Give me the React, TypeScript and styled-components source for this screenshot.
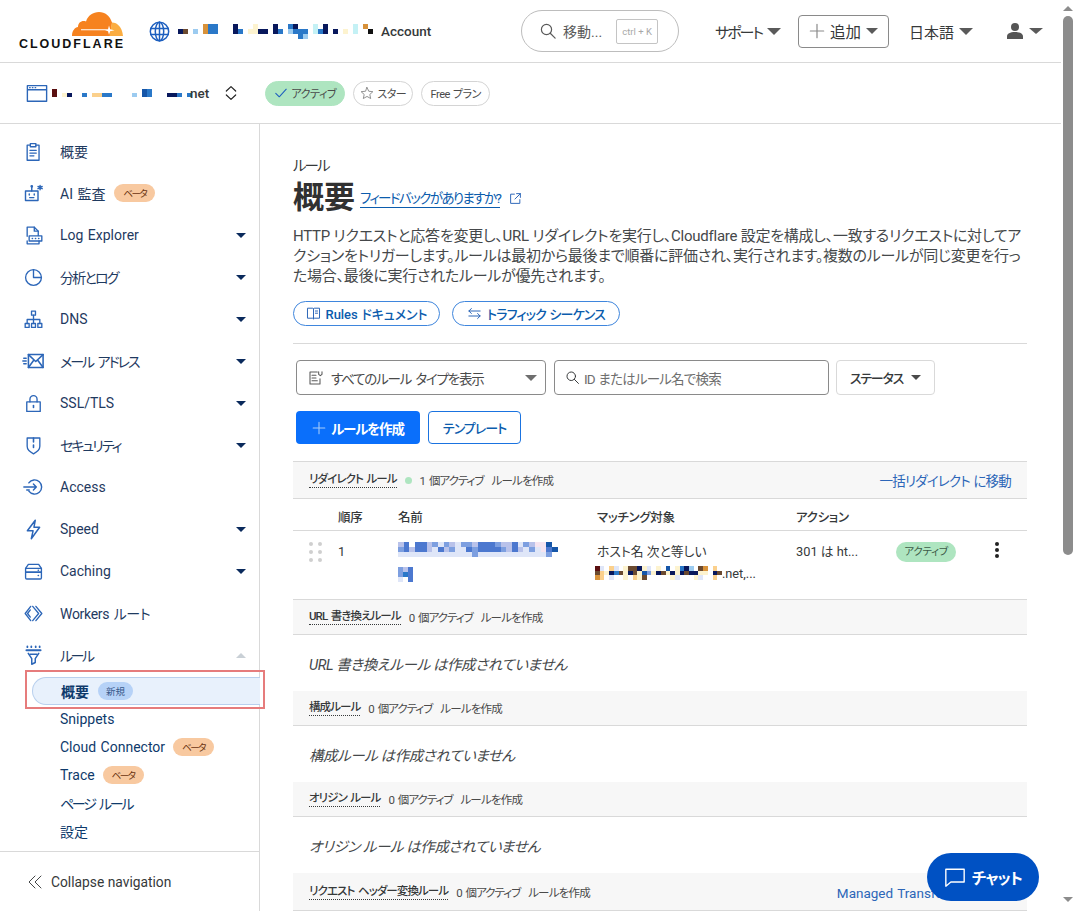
import React from 'react';
import styled, {createGlobalStyle} from 'styled-components';

const FONT = `Roboto, "Noto Sans CJK JP", sans-serif`;
const BLUE = '#2c66b8';
const LINE = '#d9d9d9';

const GlobalStyle = createGlobalStyle`
    html, body {
        margin: 0;
        padding: 0;
        background: #fff;
    }
    body {
        font-family: ${FONT};
        font-feature-settings: "palt";
        font-size: 14px;
        color: #36393a;
    }
    * {
        box-sizing: border-box;
    }
`;

const Page = styled.div`
    display: flex;
    width: 1074px;
    height: 911px;
    overflow: hidden;
    position: relative;
`;

const Main = styled.div`
    width: 1061px;
    display: flex;
    flex-direction: column;
`;

const Scrollbar = styled.div`
    width: 13px;
    display: flex;
    flex-direction: column;
    align-items: center;
    padding-top: 6px;
    position: relative;
`;

const ScrollThumb = styled.div`
    width: 10px;
    height: 539px;
    margin-top: 5px;
    background: #8c8c8c;
    border-radius: 5px;
`;

const ScrollArrowDown = styled.div`
    position: absolute;
    bottom: 6px;
`;

const Caret = styled.span<{$w?: number; $h?: number; $color?: string; $up?: boolean}>`
    display: inline-block;
    flex: none;
    width: 0;
    height: 0;
    border-left: ${({$w = 6}) => $w}px solid transparent;
    border-right: ${({$w = 6}) => $w}px solid transparent;
    ${({$up, $h = 6, $color = '#5a5a5a'}) =>
        $up ? `border-bottom: ${$h}px solid ${$color};` : `border-top: ${$h}px solid ${$color};`}
`;

const TopBar = styled.header`
    height: 63px;
    flex: none;
    display: flex;
    align-items: center;
    padding: 0 18px 0 17px;
    border-bottom: 1px solid ${LINE};
`;

const Logo = styled.div`
    width: 106px;
    display: flex;
    flex-direction: column;
    align-items: flex-end;
`;

const LogoText = styled.span`
    font-family: "Liberation Sans", sans-serif;
    font-weight: 700;
    font-size: 12.5px;
    line-height: 11px;
    letter-spacing: 2px;
    margin-right: -2px;
    color: #111;
    white-space: nowrap;
    margin-top: 3px;
`;

const AccountBlock = styled.div`
    display: flex;
    align-items: center;
    margin-left: 26px;
    gap: 8px;
`;

const AccountName = styled.span`
    font-size: 13.5px;
    font-weight: 500;
    color: #36393a;
`;

const SearchPill = styled.div`
    width: 158px;
    height: 42px;
    margin-left: auto;
    border: 1px solid #bdbdbd;
    border-radius: 21px;
    display: flex;
    align-items: center;
    padding: 0 20px 0 17px;
    color: #5a5a5a;
`;

const SearchLabel = styled.span`
    margin-left: 6px;
    flex: 1;
`;

const KeyHint = styled.span`
    width: 42px;
    height: 25px;
    border: 1px solid #c4c4c4;
    border-radius: 2px;
    font-size: 9.5px;
    color: #a8a8a8;
    display: flex;
    align-items: center;
    justify-content: center;
    white-space: nowrap;
`;

const TopMenu = styled.div<{$ml: number; $ls?: number}>`
    display: flex;
    align-items: center;
    gap: 5px;
    margin-left: ${({$ml}) => $ml}px;
    font-size: 15px;
    letter-spacing: ${({$ls = 0}) => $ls}px;
    color: #36393a;
    white-space: nowrap;
`;

const AddButton = styled.div`
    width: 91px;
    height: 33px;
    margin-left: 17px;
    border: 1px solid #8a8a8a;
    border-radius: 4px;
    display: flex;
    align-items: center;
    justify-content: center;
    gap: 5px;
    font-size: 15.5px;
    color: #36393a;
`;

const ZoneBar = styled.div`
    height: 61px;
    flex: none;
    display: flex;
    align-items: center;
    padding-left: 26px;
    border-bottom: 1px solid ${LINE};
`;

const ZoneName = styled.div`
    display: flex;
    align-items: center;
    margin-left: 4px;
    font-size: 13.5px;
    font-weight: 500;
    & > span {
        margin-left: -2px;
    }
`;

const Chevrons = styled.span`
    margin-left: 14px;
    margin-right: 26px;
    display: flex;
`;

const Chip = styled.span<{$active?: boolean; $w: number}>`
    width: ${({$w}) => $w}px;
    height: 25px;
    margin-right: 8px;
    border-radius: 13px;
    display: inline-flex;
    align-items: center;
    justify-content: center;
    gap: 3px;
    font-size: 11px;
    letter-spacing: -0.5px;
    word-spacing: 1px;
    color: #4a4a4a;
    white-space: nowrap;
    background: ${({$active}) => ($active ? '#aee5c0' : '#fff')};
    border: 1px solid ${({$active}) => ($active ? '#aee5c0' : '#d4d4d4')};
`;

const Body = styled.div`
    flex: 1;
    display: flex;
    min-height: 0;
`;

const Sidebar = styled.nav`
    width: 260px;
    flex: none;
    display: flex;
    flex-direction: column;
    padding-top: 6px;
    border-right: 1px solid ${LINE};
`;

const NavRow = styled.div`
    height: 42px;
    flex: none;
    display: flex;
    align-items: center;
    padding: 0 13px 0 21px;
    color: #1f3a5f;
`;

const NavIcon = styled.span`
    width: 24px;
    height: 24px;
    flex: none;
    margin-right: 15px;
    display: flex;
    align-items: center;
    justify-content: center;
`;

const NavLabel = styled.span`
    flex: 1;
    display: flex;
    align-items: center;
    gap: 9px;
    white-space: nowrap;
`;

const NavText = styled.span<{$ls?: number}>`
    letter-spacing: ${({$ls = 0}) => $ls}px;
    word-spacing: ${({$ls = 0}) => -$ls + 1}px;
`;

const SubRow = styled.div`
    height: 28px;
    flex: none;
    display: flex;
    align-items: center;
    gap: 8px;
    padding-left: 60px;
    color: #0e3a6b;
    white-space: nowrap;
`;

const ActiveRow = styled.div`
    height: 28px;
    flex: none;
    width: 228px;
    margin: 1px 0 0 32px;
    padding-left: 28px;
    display: flex;
    align-items: center;
    gap: 9px;
    font-weight: 700;
    color: #0e3a6b;
    background: #e8f1fc;
    border: 1px solid #b9d0ee;
    border-right: none;
    border-radius: 14px 0 0 14px;
    position: relative;
    &::after {
        content: '';
        position: absolute;
        left: -8px;
        right: -5px;
        top: -8px;
        bottom: -5px;
        border: 2px solid #e67c7c;
    }
`;

const Badge = styled.span<{$kind: 'beta' | 'new'}>`
    height: 18px;
    padding: 0 ${({$kind}) => ($kind === 'beta' ? 9 : 8)}px;
    border-radius: 9px;
    display: inline-flex;
    align-items: center;
    font-size: 9.5px;
    font-weight: 400;
    letter-spacing: ${({$kind}) => ($kind === 'beta' ? -1.5 : 0)}px;
    background: ${({$kind}) => ($kind === 'beta' ? '#f8c9a0' : '#b6d2f7')};
    color: ${({$kind}) => ($kind === 'beta' ? '#6b3410' : '#36578a')};
`;

const SideFooter = styled.div`
    margin-top: 6px;
    height: 60px;
    border-top: 1px solid ${LINE};
    display: flex;
    align-items: center;
    gap: 8px;
    padding-left: 27px;
    font-size: 13.8px;
    color: #36393a;
`;

const Content = styled.main`
    flex: 1;
    min-width: 0;
    padding: 33px 34px 0 33px;
`;

const Crumb = styled.div`
    font-size: 14.5px;
    line-height: 20px;
    letter-spacing: -2px;
    color: #36393a;
`;

const TitleRow = styled.div`
    display: flex;
    align-items: center;
    height: 36px;
    margin-top: 3px;
`;

const Title = styled.h1`
    margin: 0;
    font-size: 31px;
    font-weight: 700;
    line-height: 36px;
    color: #313131;
`;

const FeedbackLink = styled.a`
    margin: 0 9px 0 5px;
    font-size: 13.5px;
    line-height: 18px;
    letter-spacing: -1.6px;
    color: #0b5cad;
    border-bottom: 1px solid #0b5cad;
`;

const Description = styled.p`
    margin: 10px 0 0;
    font-size: 15px;
    line-height: 20px;
    letter-spacing: -0.25px;
    color: #45484a;
`;

const DocLinks = styled.div`
    display: flex;
    gap: 12px;
    margin-top: 15px;
    padding-bottom: 17px;
    border-bottom: 1px solid ${LINE};
`;

const DocLink = styled.a<{$w: number; $ls: number}>`
    width: ${({$w}) => $w}px;
    height: 25px;
    border: 1px solid #3f86dd;
    border-radius: 13px;
    display: flex;
    align-items: center;
    justify-content: center;
    gap: 5px;
    font-size: 13px;
    font-weight: 500;
    letter-spacing: ${({$ls}) => $ls}px;
    word-spacing: 1px;
    color: #0b5cad;
    white-space: nowrap;
`;

const Filters = styled.div`
    display: flex;
    margin: 16px 0 0 3px;
    height: 35px;
`;

const SelectBox = styled.div`
    width: 250px;
    border: 1px solid #8a8a8a;
    border-radius: 4px;
    display: flex;
    align-items: center;
    padding: 0 8px 0 11px;
    gap: 7px;
    font-size: 13.5px;
    letter-spacing: -1.2px;
    word-spacing: 2px;
    color: #4a4a4a;
`;

const SelectText = styled.span`
    flex: 1;
`;

const SearchBox = styled.div`
    width: 275px;
    margin-left: 8px;
    border: 1px solid #8a8a8a;
    border-radius: 4px;
    display: flex;
    align-items: center;
    gap: 4px;
    padding-left: 10px;
    font-size: 13.5px;
    letter-spacing: -0.8px;
    word-spacing: 1px;
    color: #6e6e6e;
`;

const StatusButton = styled.div`
    width: 99px;
    margin-left: 7px;
    border: 1px solid #d9d9d9;
    border-radius: 4px;
    display: flex;
    align-items: center;
    justify-content: center;
    gap: 8px;
    font-size: 13px;
    font-weight: 500;
    letter-spacing: -1.2px;
    color: #36393a;
`;

const Actions = styled.div`
    display: flex;
    gap: 8px;
    margin: 16px 0 0 3px;
    height: 33px;
`;

const PrimaryButton = styled.div`
    width: 124px;
    border-radius: 4px;
    background: #0a6ffb;
    color: #fff;
    font-size: 13.5px;
    font-weight: 700;
    letter-spacing: -1.1px;
    display: flex;
    align-items: center;
    justify-content: center;
    gap: 5px;
`;

const OutlineButton = styled.div`
    width: 93px;
    border: 1px solid #1a73e0;
    border-radius: 4px;
    color: #0b5cad;
    font-size: 13px;
    font-weight: 500;
    letter-spacing: -1px;
    display: flex;
    align-items: center;
    justify-content: center;
`;

const SectionBar = styled.div<{$first?: boolean; $tall?: boolean}>`
    height: ${({$tall}) => ($tall ? 38 : 35)}px;
    margin-top: ${({$first}) => ($first ? 17 : 0)}px;
    display: flex;
    align-items: center;
    padding: 0 16px;
    background: #f7f7f7;
    border-bottom: 1px solid ${LINE};
    ${({$first}) => ($first ? `border-top: 1px solid ${LINE};` : '')}
    font-size: 11.5px;
    color: #4a4a4a;
    white-space: nowrap;
`;

const SectionName = styled.span`
    font-weight: 500;
    letter-spacing: -0.9px;
    word-spacing: 1.5px;
    color: #36393a;
    border-bottom: 1px dotted #36393a;
    line-height: 15px;
`;

const StatusDot = styled.span`
    width: 7px;
    height: 7px;
    border-radius: 50%;
    background: #aee5c0;
    margin: 0 0 0 8px;
`;

const SectionCount = styled.span`
    margin-left: 8px;
    letter-spacing: -1px;
    word-spacing: 2px;
`;

const SectionCreate = styled.span`
    margin-left: 8px;
    letter-spacing: -0.8px;
`;

const SectionLink = styled.a<{$ls: number}>`
    margin-left: auto;
    font-size: 13.5px;
    letter-spacing: ${({$ls}) => $ls}px;
    word-spacing: 1px;
    color: #2c66b8;
`;

const RuleGrid = styled.div`
    display: grid;
    grid-template-columns: 45px 60px 199px 199px 100px 1fr;
    align-items: center;
`;

const RuleHead = styled(RuleGrid)`
    height: 32px;
    padding-top: 3px;
    font-size: 12.5px;
    font-weight: 500;
    letter-spacing: -0.3px;
    color: #36393a;
    border-bottom: 1px solid ${LINE};
`;

const RuleRow = styled(RuleGrid)`
    height: 69px;
    align-items: start;
    padding-top: 11px;
    font-size: 12.8px;
    color: #36393a;
    line-height: 20px;
    border-bottom: 1px solid ${LINE};
`;

const DragHandle = styled.span`
    display: grid;
    grid-template-columns: 4px 4px;
    gap: 4px 5px;
    margin-left: 16px;
    & > i {
        width: 4px;
        height: 4px;
        border-radius: 50%;
        background: #cfcfcf;
    }
`;

const NameCell = styled.div`
    display: flex;
    flex-direction: column;
    gap: 10px;
`;

const MatchLine = styled.div`
    display: flex;
    align-items: center;
    margin-left: -2px;
    height: 23px;
`;

const StatusBadge = styled.span`
    width: 60px;
    height: 20px;
    border-radius: 10px;
    background: #aee5c0;
    font-size: 10.5px;
    letter-spacing: -0.3px;
    display: flex;
    align-items: center;
    justify-content: center;
    color: #3d5a48;
`;

const Kebab = styled.span`
    display: flex;
    flex-direction: column;
    gap: 2px;
    margin-left: 99px;
    margin-top: -20px;
    & > i {
        width: 4px;
        height: 4px;
        border-radius: 50%;
        background: #222;
    }
`;

const EmptyNote = styled.div`
    height: 56px;
    display: flex;
    align-items: center;
    padding-left: 16px;
    font-size: 14.5px;
    font-style: italic;
    letter-spacing: -0.4px;
    color: #45484a;
`;

const ChatButton = styled.div`
    position: absolute;
    left: 927px;
    top: 853px;
    width: 112px;
    height: 48px;
    border-radius: 24px;
    background: #0051c3;
    color: #fff;
    font-size: 15.5px;
    font-weight: 700;
    letter-spacing: -0.8px;
    display: flex;
    align-items: center;
    justify-content: center;
    gap: 6px;
`;

const palette: Record<string, string> = {
    n: '#08185c',
    b: '#2a78c8',
    d: '#1656a8',
    l: '#9ccbf0',
    o: '#d8923a',
    e: '#fbd08c',
    p: '#fdf3cf',
    c: '#c4f1f5',
    k: '#111111',
    m: '#5a0f10',
    w: '#6b4a30',
    v: '#b9c2ea',
    u: '#7d9fe0',
    i: '#4c78cf',
    f: '#dfe6f8',
    g: '#f5e4f0',
};

type MosaicProps = {rows: string[]; cell: number; cellH?: number; soft?: boolean};

const MosaicSvg = styled.svg<{$soft?: boolean}>`
    display: block;
    flex: none;
    ${({$soft}) => ($soft ? 'filter: blur(0.7px);' : '')}
`;

// redacted text in the screenshot, one char per cell
function Mosaic({rows, cell, cellH = cell, soft}: MosaicProps) {
    const width = Math.max(...rows.map(row => row.length)) * cell;
    return (
        <MosaicSvg $soft={soft} width={width} height={rows.length * cellH} shapeRendering="crispEdges">
            {rows.map((row, y) =>
                row.split('').map((ch, x) =>
                    palette[ch] ? <rect key={`${x}-${y}`} x={x * cell} y={y * cellH} width={cell} height={cellH} fill={palette[ch]} /> : null,
                ),
            )}
        </MosaicSvg>
    );
}

const accountRows = [
    '.....obb...n...p...n..bn...c.n.....c.o.',
    'nw.l.obb...nb.ppnn.nb.lbbb.cbn.n.p.c..k',
    '........................bl.............',
];
const zoneRows = ['m.................db........', 'm.pn..b.eebb....l.db...nnb.b'];
const nameRows = [
    'vi.iivufuvfuuviiiuvvifuvggd.',
    'uiviivfivuffiuiiiiuvivfufgid',
    'fffffffffffffuffffffffffffu.',
];
const nameRows2 = ['uvi.', 'ubi.', 'f.i.'];
const hostRows = ['mf.ef.pwwnpf.p.d.pbnl.wo.e', 'wepnbwpnwpdupnwpnpnwnnpp.nw', 'oe.f..p.epw.....pf...pf..e'];

const Svg = styled.svg`
    display: block;
    flex: none;
`;

function Icon({size = 19, color = BLUE, sw = 1.700, children}: {size?: number; color?: string; sw?: number; children: React.ReactNode}) {
    return (
        <Svg width={size} height={size} viewBox="0 0 24 24" fill="none" stroke={color} strokeWidth={sw} strokeLinecap="round" strokeLinejoin="round">
            {children}
        </Svg>
    );
}

const icons: Record<string, React.ReactNode> = {
    overview: (
        <Icon>
            <path d="M8 4H4v19h15V4h-4" />
            <path d="M8 2h7v4H8z" />
            <path d="M7.500 10.500h8M7.500 14h8M7.500 17.500h5" />
        </Icon>
    ),
    ai: (
        <Icon size={20}>
            <path d="M3 9.500h15V21H3z" />
            <path d="M10.500 9.500V5" />
            <circle cx="10.500" cy="4" r="0.800" />
            <path d="M7.500 13v1.400M13.500 13v1.400M8 17.500h5" />
            <path d="M20.500 3v5M18 4.200l5 2.600M23 4.200l-5 2.600" />
        </Icon>
    ),
    log: (
        <Icon>
            <path d="M4 13V1.500h9L18 6.500v5.500M4 19v3.500h15V19" />
            <path d="M13 1.500v5h5" />
            <path d="M6.500 12.500h16v6.500h-16z" />
            <path d="M10.500 15.800h.2M14.500 15.800h.2M18.500 15.800h.2" strokeWidth="2" />
        </Icon>
    ),
    chart: (
        <Icon>
            <circle cx="12" cy="12" r="10" />
            <path d="M12 2v10h10" />
        </Icon>
    ),
    dns: (
        <Icon>
            <path d="M9.500 1.500h5v5h-5zM1.500 17h5v5h-5zM9.500 17h5v5h-5zM17.500 17h5v5h-5z" />
            <path d="M12 6.500V17M4 17v-5h16v5" />
        </Icon>
    ),
    mail: (
        <Icon size={22}>
            <path d="M7 5h16v14H7z" />
            <path d="M7 5l8 7.500L23 5M7 19l6-8M23 19l-6-8" />
            <path d="M1 12h3.500M2 9h2.500M2 15h2.500" strokeWidth="1.800" />
        </Icon>
    ),
    lock: (
        <Icon>
            <path d="M3.500 10h17v12h-17z" />
            <path d="M7.500 10V6.500a4.500 4.500 0 0 1 9 0V10" />
            <path d="M12 14.500v2.500" strokeWidth="2" />
        </Icon>
    ),
    shield: (
        <Icon>
            <path d="M4 2.500h16v10.500c0 4.500-4 7.500-8 9.500-4-2-8-5-8-9.500z" />
            <path d="M12 2.500v5M12 11.500v3" strokeWidth="2" />
        </Icon>
    ),
    access: (
        <Icon size={20}>
            <path d="M7 7a8.500 8.500 0 1 1 0 10" />
            <path d="M1 12h15M12.500 8.500L16 12l-3.500 3.500" />
            <path d="M4.500 15.500h3" />
        </Icon>
    ),
    speed: (
        <Icon size={21}>
            <path d="M14 1.500L5 13.500h6.500L9.500 22.500l9.500-13h-6.500z" />
        </Icon>
    ),
    cache: (
        <Icon>
            <path d="M5.500 3h13L22 8v5H2V8z" />
            <path d="M2 8h20" />
            <path d="M2 13h20v7a1.500 1.500 0 0 1-1.500 1.500h-17A1.500 1.500 0 0 1 2 20z" />
            <path d="M18 10.500h.2M18 17h.2" strokeWidth="2" />
        </Icon>
    ),
    workers: (
        <Icon>
            <path d="M8.500 3L1.500 12l7 9" />
            <path d="M11 3l7.500 9-7.500 9" />
            <path d="M15 3l7.500 9-7.500 9" />
            <path d="M8 7.500L4.500 12 8 16.500" />
        </Icon>
    ),
    rules: (
        <Icon size={21}>
            <path d="M5 1.500v1M9.500 1.500v1M14.500 1.500v1M19 1.500v1" strokeWidth="2" />
            <path d="M4 6h16" strokeWidth="2.400" />
            <path d="M6 9.500l4 6V22l4-2v-4.500l4-6" />
            <path d="M8 10.500h8" />
        </Icon>
    ),
};

type NavItem = {label: string; icon: string; beta?: boolean; caret?: boolean; ls?: number};

const navItems: NavItem[] = [
    {label: '概要', icon: 'overview'},
    {label: 'AI 監査', icon: 'ai', beta: true},
    {label: 'Log Explorer', icon: 'log', caret: true},
    {label: '分析とログ', icon: 'chart', caret: true, ls: -1.8},
    {label: 'DNS', icon: 'dns', caret: true},
    {label: 'メール アドレス', icon: 'mail', caret: true, ls: -2},
    {label: 'SSL/TLS', icon: 'lock', caret: true},
    {label: 'セキュリティ', icon: 'shield', caret: true, ls: -2},
    {label: 'Access', icon: 'access'},
    {label: 'Speed', icon: 'speed', caret: true},
    {label: 'Caching', icon: 'cache', caret: true},
    {label: 'Workers ルート', icon: 'workers', ls: -0.3},
];

const subItems: {label: string; beta?: boolean; ls?: number}[] = [
    {label: 'Snippets'},
    {label: 'Cloud Connector', beta: true},
    {label: 'Trace', beta: true},
    {label: 'ページ ルール', ls: -2.3},
    {label: '設定'},
];

function CloudflareLogo() {
    return (
        <Logo>
            <Svg width="51" height="24" viewBox="0 0 51 24">
                <path fill="#f6821f" d="M0 24C0 18.500 3 15.500 6 15 6 10.500 10 8 14 9.500 16 3.500 21 0 27 0c6 0 11 4 13 10.500L38.500 24z" />
                <path fill="#fbad41" d="M37.500 24l2.500-13.500C45.500 10.500 50 15 51 24z" />
                <path fill="#fff" d="M9 17.200h27.500l.5 1H9zM37 13.500l1.200 3.800 4.300 1-4.300 1-1.200 3.500-1-3.500-3-1 3-1z" />
            </Svg>
            <LogoText>CLOUDFLARE</LogoText>
        </Logo>
    );
}

function GlobeIcon() {
    return (
        <Icon size={21} color="#1d5fbf" sw={1.700}>
            <circle cx="12" cy="12" r="10.500" />
            <ellipse cx="12" cy="12" rx="4.800" ry="10.500" />
            <path d="M12 1.500v21M2 8.500h20M2 15.500h20" />
        </Icon>
    );
}

function SearchIcon({size = 18, color = '#5a5a5a'}: {size?: number; color?: string}) {
    return (
        <Icon size={size} color={color} sw={1.600}>
            <circle cx="10" cy="10" r="6.800" />
            <path d="M15 15l6.500 6.500" />
        </Icon>
    );
}

function PlusIcon({size = 16, color = '#8a8a8a'}: {size?: number; color?: string}) {
    return (
        <Icon size={size} color={color} sw={1.800}>
            <path d="M12 2v20M2 12h20" />
        </Icon>
    );
}

function SectionHeader({name, count, first, link, linkLs = 0, dot}: {name: string; count: string; first?: boolean; link?: string; linkLs?: number; dot?: boolean}) {
    return (
        <SectionBar $first={first} $tall={Boolean(link)}>
            <SectionName>{name}</SectionName>
            {dot && <StatusDot />}
            <SectionCount>{count}</SectionCount>
            <SectionCreate>ルールを作成</SectionCreate>
            {link && <SectionLink $ls={linkLs}>{link}</SectionLink>}
        </SectionBar>
    );
}

export default function App() {
    return (
        <Page>
            <GlobalStyle />
            <Main>
                <TopBar>
                    <CloudflareLogo />
                    <AccountBlock>
                        <GlobeIcon />
                        <Mosaic rows={accountRows} cell={5} />
                        <AccountName>Account</AccountName>
                    </AccountBlock>
                    <SearchPill>
                        <SearchIcon />
                        <SearchLabel>移動...</SearchLabel>
                        <KeyHint>ctrl + K</KeyHint>
                    </SearchPill>
                    <TopMenu $ml={36} $ls={-2}>
                        サポート
                        <Caret $w={7} $h={7} />
                    </TopMenu>
                    <AddButton>
                        <PlusIcon />
                        追加
                        <Caret $w={6} $h={6} />
                    </AddButton>
                    <TopMenu $ml={20}>
                        日本語
                        <Caret $w={7} $h={7} />
                    </TopMenu>
                    <TopMenu $ml={33}>
                        <Svg width="18" height="18" viewBox="0 0 18 18">
                            <circle cx="9" cy="5" r="4" fill="#555" />
                            <path fill="#555" d="M1 17v-2.500C1 11.500 4 10 9 10s8 1.500 8 4.500V17z" />
                        </Svg>
                        <Caret $w={7} $h={6} />
                    </TopMenu>
                </TopBar>
                <ZoneBar>
                    <Icon size={22} color="#2c66b8" sw={1.500}>
                        <path d="M1.500 4h21v17h-21zM1.500 8.500h21" />
                        <path d="M4 6.200h.5M7 6.200h.5M10 6.200h.5" />
                    </Icon>
                    <ZoneName>
                        <Mosaic rows={zoneRows} cell={5} cellH={4} />
                        <span>net</span>
                    </ZoneName>
                    <Chevrons>
                        <Icon size={16} color="#222" sw={1.800}>
                            <path d="M5 9l7-6.500L19 9M5 15l7 6.500 7-6.500" />
                        </Icon>
                    </Chevrons>
                    <Chip $active $w={80}>
                        <Icon size={14} color="#1d5fbf" sw={1.800}>
                            <path d="M3 12.500l6 6L21 5.500" />
                        </Icon>
                        アクティブ
                    </Chip>
                    <Chip $w={60}>
                        <Icon size={14} color="#7a7a7a" sw={1.400}>
                            <path d="M12 2.500l3 6.500 7 .8-5.200 4.700 1.500 7-6.300-3.600-6.300 3.600 1.500-7L2 9.800 9 9z" />
                        </Icon>
                        スター
                    </Chip>
                    <Chip $w={69}>Free プラン</Chip>
                </ZoneBar>
                <Body>
                    <Sidebar>
                        {navItems.map(item => (
                            <NavRow key={item.label}>
                                <NavIcon>{icons[item.icon]}</NavIcon>
                                <NavLabel>
                                    <NavText $ls={item.ls}>{item.label}</NavText>
                                    {item.beta && <Badge $kind="beta">ベータ</Badge>}
                                </NavLabel>
                                {item.caret && <Caret $w={5} $h={5} $color="#0a2a5c" />}
                            </NavRow>
                        ))}
                        <NavRow>
                            <NavIcon>{icons.rules}</NavIcon>
                            <NavLabel>
                                <NavText $ls={-2.5}>ルール</NavText>
                            </NavLabel>
                            <Caret $w={5} $h={5} $color="#c9d0d6" $up />
                        </NavRow>
                        <ActiveRow>
                            概要
                            <Badge $kind="new">新規</Badge>
                        </ActiveRow>
                        {subItems.map(item => (
                            <SubRow key={item.label}>
                                <NavText $ls={item.ls}>{item.label}</NavText>
                                {item.beta && <Badge $kind="beta">ベータ</Badge>}
                            </SubRow>
                        ))}
                        <SideFooter>
                            <Icon size={16} color="#36393a" sw={1.400}>
                                <path d="M12 3L3 12l9 9M21 3l-9 9 9 9" />
                            </Icon>
                            Collapse navigation
                        </SideFooter>
                    </Sidebar>
                    <Content>
                        <Crumb>ルール</Crumb>
                        <TitleRow>
                            <Title>概要</Title>
                            <FeedbackLink>フィードバックがありますか?</FeedbackLink>
                            <Icon size={13} color="#2c66b8" sw={1.800}>
                                <path d="M10 4H3v17h17v-7" />
                                <path d="M14 3h7v7M21 3L11 13" />
                            </Icon>
                        </TitleRow>
                        <Description>
                            HTTP リクエストと応答を変更し、URL リダイレクトを実行し、Cloudflare 設定を構成し、一致するリクエストに対してアクションをトリガーします。ルールは最初から最後まで順番に評価され、実行されます。複数のルールが同じ変更を行った場合、最後に実行されたルールが優先されます。
                        </Description>
                        <DocLinks>
                            <DocLink $w={147} $ls={-0.1}>
                                <Icon size={15} color="#2c66b8" sw={1.600}>
                                    <path d="M3 3.500h7.500a1.500 1.500 0 0 1 1.500 1.500v16a1.500 1.500 0 0 0-1.500-1.500H3zM21 3.500h-7.500A1.500 1.500 0 0 0 12 5v16a1.500 1.500 0 0 1 1.500-1.500H21z" />
                                    <path d="M15 8h3.500M15 11.500h3.500" />
                                </Icon>
                                Rules ドキュメント
                            </DocLink>
                            <DocLink $w={168} $ls={-0.8}>
                                <Icon size={15} color="#2c66b8" sw={1.600}>
                                    <path d="M3 8h18M7 4L3 8l4 4M21 16H3M17 12l4 4-4 4" />
                                </Icon>
                                トラフィック シーケンス
                            </DocLink>
                        </DocLinks>
                        <Filters>
                            <SelectBox>
                                <Icon size={16} color="#5a5a5a" sw={1.600}>
                                    <path d="M14 3H3v18h15v-8" />
                                    <path d="M6 8h6M6 12h6M6 16h8" />
                                    <path d="M16 2.500v4l2.500 2 2.500-2v-4" />
                                </Icon>
                                <SelectText>すべてのルール タイプを表示</SelectText>
                                <Caret $w={6} $h={6} $color="#6e6e6e" />
                            </SelectBox>
                            <SearchBox>
                                <SearchIcon size={15} color="#36393a" />
                                ID またはルール名で検索
                            </SearchBox>
                            <StatusButton>
                                ステータス
                                <Caret $w={5} $h={5} $color="#4a4a4a" />
                            </StatusButton>
                        </Filters>
                        <Actions>
                            <PrimaryButton>
                                <PlusIcon size={14} color="#a8cdfa" />
                                ルールを作成
                            </PrimaryButton>
                            <OutlineButton>テンプレート</OutlineButton>
                        </Actions>
                        <SectionHeader first dot name="リダイレクト ルール" count="1 個アクティブ" link="一括リダイレクト に移動" linkLs={-0.8} />
                        <RuleHead>
                            <span />
                            <span>順序</span>
                            <span>名前</span>
                            <span>マッチング対象</span>
                            <span>アクション</span>
                            <span />
                        </RuleHead>
                        <RuleRow>
                            <DragHandle>
                                {Array.from({length: 6}, (_, i) => (
                                    <i key={i} />
                                ))}
                            </DragHandle>
                            <span>1</span>
                            <NameCell>
                                <Mosaic soft rows={nameRows} cell={5.700} cellH={5} />
                                <Mosaic soft rows={nameRows2} cell={5} />
                            </NameCell>
                            <div>
                                ホスト名 次と等しい
                                <MatchLine>
                                    <Mosaic rows={hostRows} cell={4.700} />
                                    .net,...
                                </MatchLine>
                            </div>
                            <span>301 は ht...</span>
                            <div>
                                <StatusBadge>アクティブ</StatusBadge>
                                <Kebab>
                                    <i />
                                    <i />
                                    <i />
                                </Kebab>
                            </div>
                        </RuleRow>
                        <SectionHeader name="URL 書き換えルール" count="0 個アクティブ" />
                        <EmptyNote>URL 書き換えルール は作成されていません</EmptyNote>
                        <SectionHeader name="構成ルール" count="0 個アクティブ" />
                        <EmptyNote>構成ルール は作成されていません</EmptyNote>
                        <SectionHeader name="オリジン ルール" count="0 個アクティブ" />
                        <EmptyNote>オリジン ルール は作成されていません</EmptyNote>
                        <SectionHeader name="リクエスト ヘッダー変換ルール" count="0 個アクティブ" link="Managed Transforms に移動" />
                    </Content>
                </Body>
            </Main>
            <Scrollbar>
                <Caret $w={5} $h={5} $color="#8c8c8c" $up />
                <ScrollThumb />
                <ScrollArrowDown>
                    <Caret $w={5} $h={5} $color="#8c8c8c" />
                </ScrollArrowDown>
            </Scrollbar>
            <ChatButton>
                <Icon size={22} color="#fff" sw={1.500}>
                    <path d="M2 3.500h20v14H7.500L2 22z" />
                </Icon>
                チャット
            </ChatButton>
        </Page>
    );
}
